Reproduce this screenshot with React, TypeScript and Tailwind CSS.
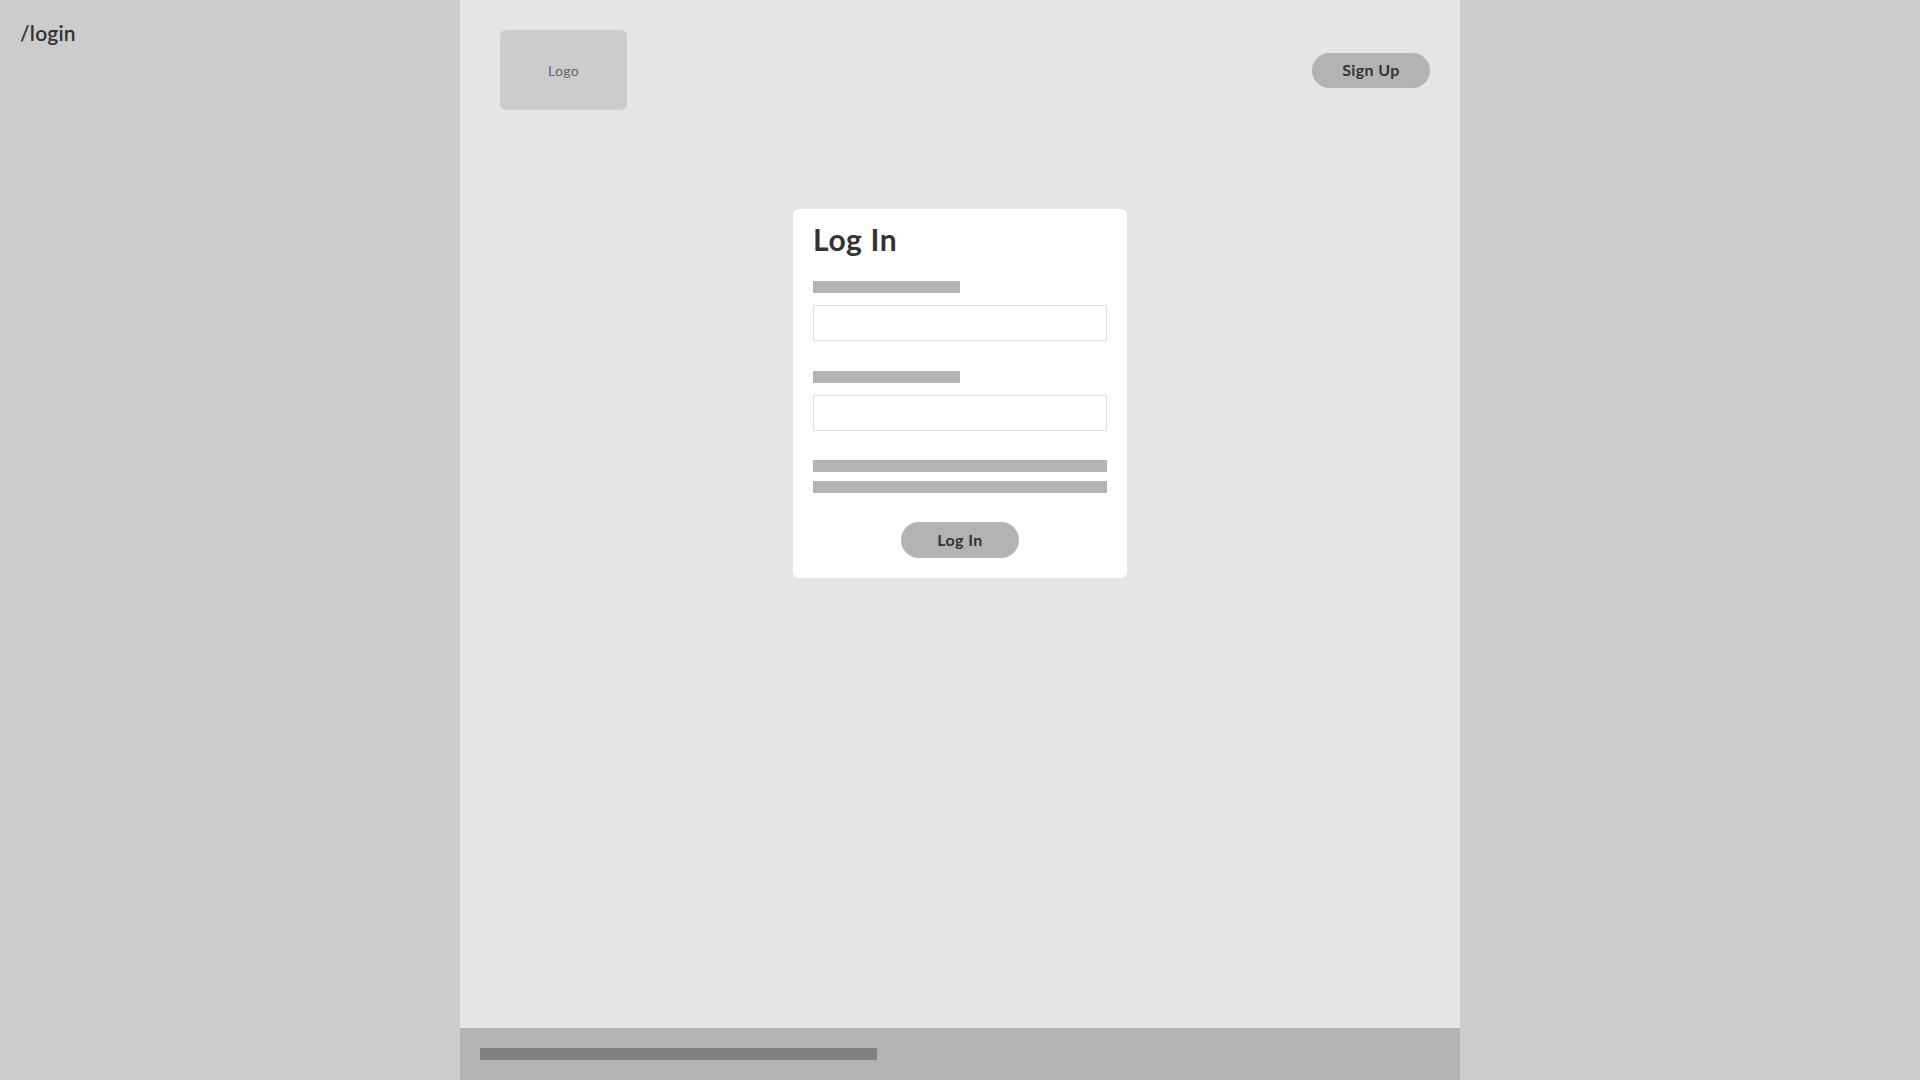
import React from "react";

export default function App() {
  const font = { fontFamily: "Lato, 'Noto Sans', 'Liberation Sans', sans-serif" };
  return (
    <div className="flex h-screen w-full overflow-hidden bg-[#cccccc]" style={font}>
      <div className="w-[460px] shrink-0 pl-[20px] pt-[21px]">
        <div className="text-[21px] leading-[24px] font-semibold tracking-[0.2px] text-[#333333]">/login</div>
      </div>
      <div className="flex w-[1000px] shrink-0 flex-col bg-[#e5e5e5]">
        <div className="flex items-center justify-between pl-[40px] pr-[30px] pt-[30px]">
          <div className="flex h-[80px] w-[127px] items-center justify-center rounded-[6px] bg-[#cccccc] text-[14px] tracking-[0.3px] text-[#666666]">
            Logo
          </div>
          <div className="flex h-[35px] w-[118px] items-center justify-center rounded-full bg-[#b3b3b3] text-[16px] font-bold tracking-[0.4px] text-[#333333]">
            Sign Up
          </div>
        </div>
        <div className="flex justify-center pt-[99px]">
          <div className="flex w-[334px] flex-col rounded-[6px] bg-white px-[20px] pt-[15px] pb-[20px]">
            <div className="text-[30px] leading-[30px] font-bold tracking-[0.6px] text-[#333333]">Log In</div>
            <div className="mt-[27px] h-[12px] w-[147px] bg-[#b3b3b3]" />
            <div className="mt-[12px] h-[36px] w-full border border-[#dddddd] bg-white" />
            <div className="mt-[30px] h-[12px] w-[147px] bg-[#b3b3b3]" />
            <div className="mt-[12px] h-[36px] w-full border border-[#dddddd] bg-white" />
            <div className="mt-[29px] h-[12px] w-full bg-[#b3b3b3]" />
            <div className="mt-[9px] h-[12px] w-full bg-[#b3b3b3]" />
            <div className="mt-[29px] flex justify-center">
              <div className="flex h-[36px] w-[118px] items-center justify-center rounded-full bg-[#b3b3b3] text-[16px] font-bold tracking-[0.4px] text-[#333333]">
                Log In
              </div>
            </div>
          </div>
        </div>
        <div className="mt-auto h-[52px] shrink-0 bg-[#b3b3b3] pl-[20px] pt-[20px]">
          <div className="h-[12px] w-[397px] bg-[#808080]" />
        </div>
      </div>
      <div className="flex-1" />
    </div>
  );
}
